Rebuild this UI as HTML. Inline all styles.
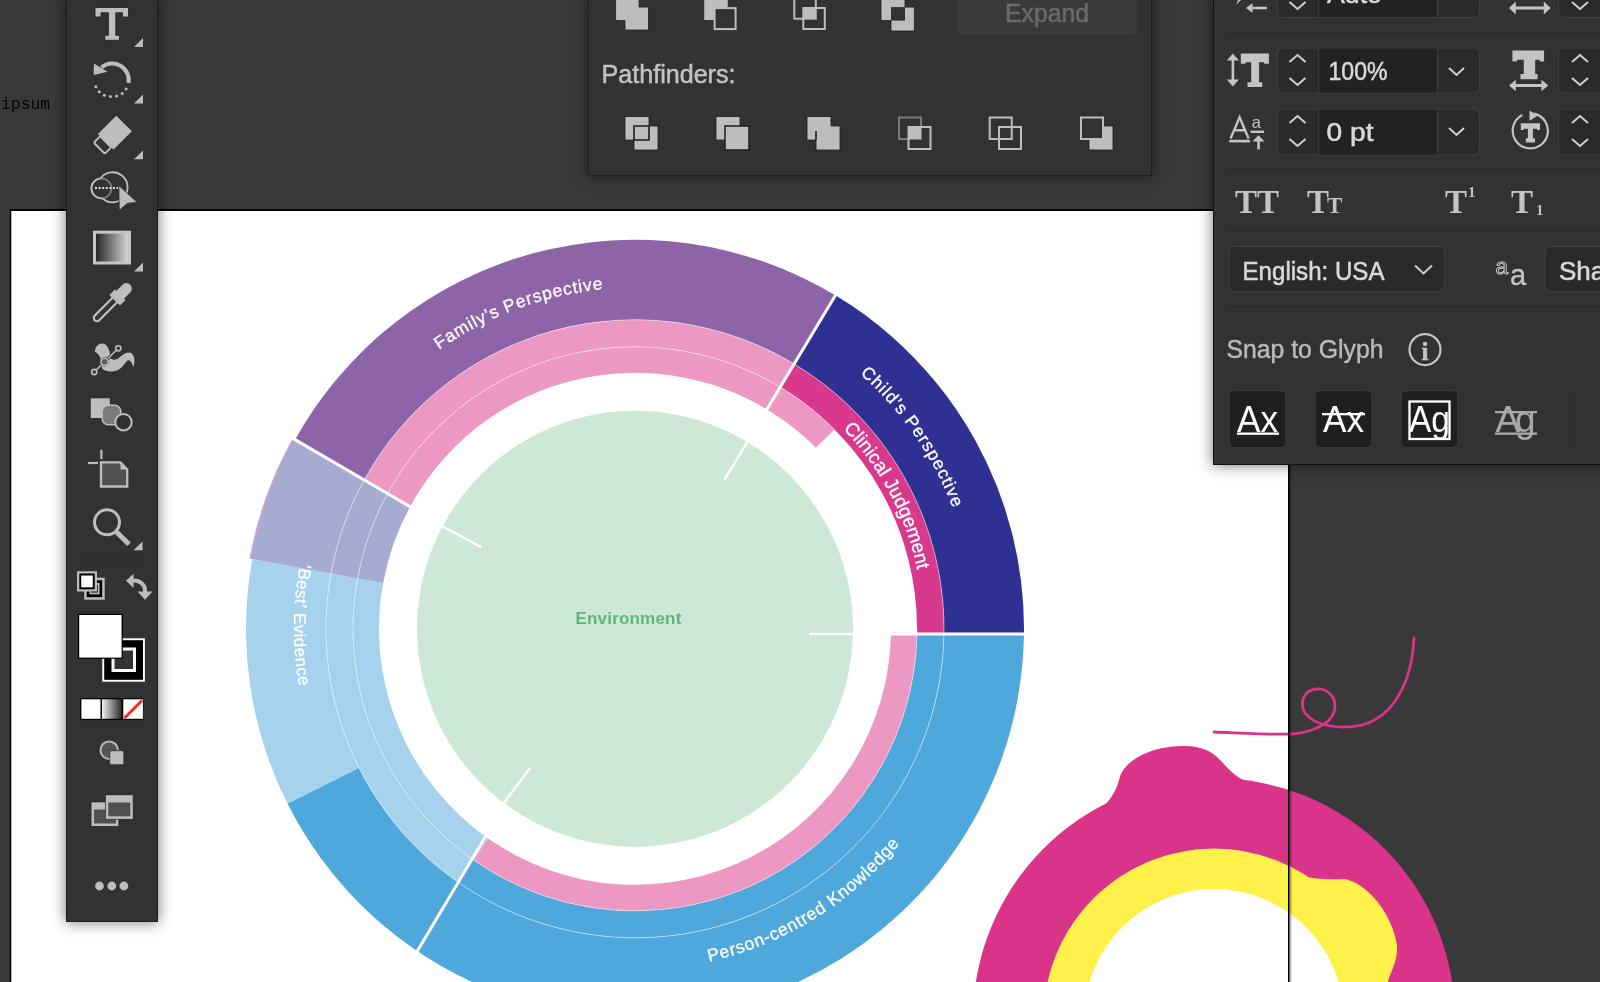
<!DOCTYPE html>
<html><head><meta charset="utf-8">
<style>
html,body{margin:0;padding:0;width:1600px;height:982px;overflow:hidden;background:#393939;}
body{position:relative;font-family:"Liberation Sans",sans-serif;}
.abs{position:absolute;}
#ipsum{left:0.6px;top:95.2px;font-family:"Liberation Mono",monospace;font-size:16.4px;color:#050505;}
#artboard{left:10px;top:209px;width:1279px;height:773px;background:#fff;}
#art{left:0;top:0;width:1600px;height:982px;}
#abborder{left:9px;top:208.5px;width:1279px;height:800px;border:1.5px solid #000;}
.panel{background:#323232;box-shadow:0 0 14px rgba(0,0,0,0.55);}
#toolbar{left:66px;top:-2px;width:90px;height:922px;border:1px solid #1e1e1e;}
#pathf{left:588px;top:-4px;width:562px;height:178px;border:1px solid #202020;}
#charp{left:1213px;top:-4px;width:400px;height:467px;border:1px solid #111;}
#ui{left:0;top:0;width:1600px;height:982px;will-change:transform;}
#art{will-change:transform;}
#ipsum{will-change:transform;}
.t{position:absolute;white-space:nowrap;font-family:"Liberation Sans",sans-serif;}
</style></head><body>
<div id="ipsum" class="abs">ipsum</div>
<div id="artboard" class="abs"></div>
<svg id="art" class="abs" width="1600" height="982" viewBox="0 0 1600 982">
<defs><path id="tp1" d="M339.69,458.30 A341,341 0 0 1 749.95,307.76" fill="none"/><path id="tp2" d="M786.18,324.26 A340,340 0 0 1 973.38,595.62" fill="none"/><path id="tp3" d="M797.16,390.19 A288.5,288.5 0 0 1 923.50,629.81" fill="none"/><path id="tp4" d="M315.80,508.82 A341,341 0 0 0 313.36,742.07" fill="none"/><path id="tp5" d="M586.36,966.31 A341,341 0 0 0 958.94,735.31" fill="none"/></defs>
<path d="M294.61,440.51 A389,389 0 0 1 835.35,295.36 L794.15,363.94 A309,309 0 0 0 364.61,479.23 Z" fill="#8e64a8"/><path d="M835.35,295.36 A389,389 0 0 1 1023.96,634.57 L943.97,633.38 A309,309 0 0 0 794.15,363.94 Z" fill="#2e3192"/><path d="M1023.96,634.57 A389,389 0 0 1 287.48,803.59 L358.95,767.64 A309,309 0 0 0 943.97,633.38 Z" fill="#4fa8dc"/><path d="M287.48,803.59 A389,389 0 0 1 252.27,559.25 L330.98,573.55 A309,309 0 0 0 358.95,767.64 Z" fill="#a6d2ee"/><path d="M249.81,558.80 A391.5,391.5 0 0 1 292.42,439.30 L364.61,479.23 A309,309 0 0 0 330.98,573.55 Z" fill="#a7aad1"/><path d="M250.18,556.78 A391.5,391.5 0 0 1 290.94,441.99" fill="none" stroke="#f0a0d0" stroke-width="0.9"/><path d="M363.83,480.65 A309,309 0 0 1 794.15,363.94 L780.24,387.08 A282,282 0 0 0 387.53,493.59 Z" fill="#ec98c3"/><path d="M794.15,363.94 A309,309 0 0 1 943.97,633.38 L916.97,632.98 A282,282 0 0 0 780.24,387.08 Z" fill="#d9398d"/><path d="M943.97,633.38 A309,309 0 0 1 457.76,881.92 L473.25,859.80 A282,282 0 0 0 916.97,632.98 Z" fill="#4fa8dc"/><path d="M457.76,881.92 A309,309 0 0 1 330.98,573.55 L357.54,578.38 A282,282 0 0 0 473.25,859.80 Z" fill="#a6d2ee"/><path d="M330.98,573.55 A309,309 0 0 1 363.83,480.65 L387.53,493.59 A282,282 0 0 0 357.54,578.38 Z" fill="#a7aad1"/><path d="M387.17,494.24 A282,282 0 0 1 834.40,429.40 L816.02,447.78 A256,256 0 0 0 410.02,506.65 Z" fill="#ec98c3"/><path d="M916.97,632.98 A282,282 0 0 1 473.25,859.80 L488.16,838.50 A256,256 0 0 0 890.97,632.60 Z" fill="#ec98c3"/><path d="M473.25,859.80 A282,282 0 0 1 357.54,578.38 L383.13,583.03 A256,256 0 0 0 488.16,838.50 Z" fill="#a6d2ee"/><path d="M357.54,578.38 A282,282 0 0 1 387.17,494.24 L410.02,506.65 A256,256 0 0 0 383.13,583.03 Z" fill="#a7aad1"/><path d="M387.17,494.24 A282,282 0 0 1 834.40,429.40" stroke="#ffffff" stroke-opacity="0.45" stroke-width="1" fill="none"/><path d="M917.00,628.80 A282,282 0 1 1 387.17,494.24" stroke="#ffffff" stroke-opacity="0.45" stroke-width="1" fill="none"/><path d="M326.00,628.26 A309,309 0 1 1 326.00,629.34" stroke="#ffffff" stroke-opacity="0.45" stroke-width="1" fill="none"/><circle cx="635.0" cy="628.8" r="218" fill="#cde8d6"/><line x1="411.78" y1="507.60" x2="409.14" y2="506.17" stroke="#fff" stroke-width="3"/><line x1="411.78" y1="507.60" x2="291.61" y2="437.67" stroke="#fff" stroke-width="3"/><line x1="765.82" y1="411.08" x2="836.38" y2="293.65" stroke="#fff" stroke-width="3"/><line x1="486.5" y1="834.8" x2="416.5" y2="952.5" stroke="#fff" stroke-width="3"/><line x1="885" y1="634" x2="1026" y2="634" stroke="#fff" stroke-width="3"/><line x1="481.37" y1="547.11" x2="441.63" y2="525.99" stroke="#fff" stroke-width="2.5"/><line x1="724.62" y1="479.65" x2="747.79" y2="441.08" stroke="#fff" stroke-width="2.5"/><line x1="530.28" y1="767.76" x2="503.20" y2="803.70" stroke="#fff" stroke-width="2.5"/><line x1="809" y1="634" x2="855" y2="634" stroke="#fff" stroke-width="2.5"/>
<text font-family="Liberation Sans, sans-serif" font-size="17.5" fill="#fff" stroke="#fff" stroke-width="0.3" letter-spacing="0.85"><textPath href="#tp1" startOffset="50%" text-anchor="middle">Family’s Perspective</textPath></text><text font-family="Liberation Sans, sans-serif" font-size="17.5" fill="#fff" stroke="#fff" stroke-width="0.3" letter-spacing="0.9"><textPath href="#tp2" startOffset="50%" text-anchor="middle">Child’s Perspective</textPath></text><text font-family="Liberation Sans, sans-serif" font-size="19" fill="#fff" stroke="#fff" stroke-width="0.3" letter-spacing="0.05"><textPath href="#tp3" startOffset="50%" text-anchor="middle">Clinical Judgement</textPath></text><text font-family="Liberation Sans, sans-serif" font-size="17" fill="#fff" stroke="#fff" stroke-width="0.3" letter-spacing="0.55"><textPath href="#tp4" startOffset="50%" text-anchor="middle">‘Best’ Evidence</textPath></text><text font-family="Liberation Sans, sans-serif" font-size="17.5" fill="#fff" stroke="#fff" stroke-width="0.3" letter-spacing="0.75"><textPath href="#tp5" startOffset="50%" text-anchor="middle">Person-centred Knowledge</textPath></text>
<text x="628.5" y="624" font-family="Liberation Sans, sans-serif" font-size="17" font-weight="bold" fill="#5fb47c" text-anchor="middle" letter-spacing="0.2">Environment</text>
<!-- donut -->
<circle cx="1214" cy="1019" r="241" fill="#d9338a"/>
<path d="M1097,813 C1109,802 1116,792 1119,780 C1123,760 1152,746 1183,746 C1203,746 1213,752 1222,762 C1232,773 1238,779 1250,782 L1290,790 L1200,830 Z" fill="#d9338a"/>
<circle cx="1214" cy="1019" r="150" fill="none" stroke="#fff04a" stroke-width="41"/>
<path d="M1280,868 C1300,878 1320,880 1345,879 C1370,885 1392,915 1397,945 C1398,962 1390,972 1388,982 L1300,982 Z" fill="#fff04a"/>
<circle cx="1214" cy="1019" r="130" fill="#fff"/>
<path d="M1214,732 C1240,733 1270,735 1290,734 C1310,733 1330,725 1334,712 C1338,698 1328,688 1316,689 C1304,690 1299,703 1305,713 C1314,726 1340,730 1362,725 C1395,716 1412,680 1414,638" fill="none" stroke="#d9338a" stroke-width="2.8" stroke-linecap="round"/>
</svg>
<svg class="abs" style="left:0;top:0" width="1600" height="982"><rect x="9.8" y="209" width="1279.7" height="2" fill="#000"/><rect x="9.8" y="209" width="1.5" height="773" fill="#000"/><rect x="1288" y="209" width="1.6" height="773" fill="#000"/><rect x="1289.6" y="211" width="2" height="771" fill="#000" opacity="0.25"/></svg>
<div id="toolbar" class="abs panel"></div>
<div id="pathf" class="abs panel"></div>
<div id="charp" class="abs panel"></div>
<svg id="ui" class="abs" width="1600" height="982" viewBox="0 0 1600 982">
<g id="toolicons" fill="#bdbdbd">
  <!-- Type tool T -->
  <path d="M95,7.5 H128.5 V17 H122.5 V12.8 H115.8 V35.3 H119.5 V40.3 H104.8 V35.3 H108.4 V12.8 H101 V17 H95 Z" stroke="#1a1a1a" stroke-width="0.8"/>
  <path d="M143,38 V47 H134 Z"/>
  <!-- Rotate -->
  <path d="M101.5,67.5 A16.5,16.5 0 0 1 128.5,83" fill="none" stroke="#bdbdbd" stroke-width="4"/>
  <path d="M94,63.5 L107.5,71.8 L93.6,75 Z"/>
  <g>
    <circle cx="95.8" cy="86.8" r="1.5"/><circle cx="99.3" cy="91.8" r="1.5"/><circle cx="104.3" cy="95.2" r="1.5"/>
    <circle cx="110.4" cy="96.5" r="1.5"/><circle cx="116.6" cy="96.1" r="1.5"/><circle cx="122.2" cy="93.5" r="1.5"/><circle cx="126.1" cy="89" r="1.5"/>
  </g>
  <path d="M143,94.6 V103.5 H134 Z"/>
  <!-- Eraser -->
  <g transform="translate(114.9,132.6) rotate(45)">
    <rect x="-11" y="-13" width="22" height="26" fill="#bdbdbd"/>
    <rect x="-7.8" y="13" width="15.6" height="9" rx="1.5" fill="#323232" stroke="#bdbdbd" stroke-width="2"/>
  </g>
  <path d="M143,150.4 V159.3 H134 Z"/>
  <!-- Shape builder -->
  <circle cx="101.4" cy="188.4" r="10" fill="none" stroke="#7a7a7a" stroke-width="1.8"/>
  <path d="M102.45,198.35 A10,10 0 0 1 100.5,178.4" fill="none" stroke="#bdbdbd" stroke-width="1.8"/>
  <path d="M100.5,178.4 A15,15 0 1 1 102.45,198.35" fill="none" stroke="#bdbdbd" stroke-width="1.8"/>
  <path d="M95,188 H118" stroke="#e0e0e0" stroke-width="2" stroke-dasharray="2,1.6"/>
  <path d="M118.8,185.6 L137.3,202.4 L127.5,203.2 L119.3,210.3 Z" fill="#bdbdbd" stroke="#323232" stroke-width="0.8"/>
  <!-- Gradient -->
  <defs>
    <linearGradient id="gtool" x1="0" x2="1" y1="0" y2="0"><stop offset="0" stop-color="#1e1e1e"/><stop offset="1" stop-color="#dcdcdc"/></linearGradient>
    <linearGradient id="gsw" x1="0" x2="1" y1="0" y2="0"><stop offset="0" stop-color="#f2f2f2"/><stop offset="1" stop-color="#2a2a2a"/></linearGradient>
  </defs>
  <rect x="94.5" y="232.2" width="35" height="30.8" fill="url(#gtool)" stroke="#c4c4c4" stroke-width="3"/>
  <path d="M143,262.6 V271.5 H134 Z"/>
  <!-- Eyedropper -->
  <g transform="translate(118.2,296.7) rotate(-45)">
    <path d="M-4,-3.2 H-30 A3.2,3.2 0 0 0 -30,3.2 H-4 Z" fill="#323232" stroke="#bdbdbd" stroke-width="2.2"/>
    <rect x="-5" y="-7.5" width="8" height="15" rx="1"/>
    <path d="M2,-5.5 H11.5 A5.5,5.5 0 0 1 11.5,5.5 H2 Z"/>
  </g>
  <!-- Puppet warp -->
  <path d="M95,352 C95,346 99,343 103,343.5 C108,344.5 110,351 110.5,358 C113,361 117,360 120,357 C124,353 129,351 132,353.5 C135,357 135,362 133.5,367 C132,363 130,359 127.5,360.5 C124,363 122,371 112,371.5 C104,372 100,368 100.5,362 C101,357 99,354 95,352 Z"/>
  <path d="M94.2,372 L118.3,348.3" stroke="#323232" stroke-width="3.2"/>
  <path d="M94.2,372 L118.3,348.3" stroke="#bdbdbd" stroke-width="1.6"/>
  <circle cx="94.2" cy="372" r="2.6" fill="#323232" stroke="#bdbdbd" stroke-width="1.6"/>
  <circle cx="118.3" cy="348.3" r="2.6" fill="#323232" stroke="#bdbdbd" stroke-width="1.6"/>
  <circle cx="104.6" cy="361.8" r="4.6" fill="#323232"/>
  <circle cx="104.6" cy="361.8" r="3.6" fill="#5a5a5a" stroke="#bdbdbd" stroke-width="1.6"/>
  <!-- Live paint shapes -->
  <rect x="90.8" y="398.3" width="19" height="19.7"/>
  <rect x="102.2" y="405.2" width="18.5" height="19.5" rx="6" fill="#7a7a7a" stroke="#bdbdbd" stroke-width="1.6"/>
  <circle cx="123.5" cy="422.2" r="8.2" fill="#323232" stroke="#bdbdbd" stroke-width="2"/>
  <!-- Artboard tool -->
  <path d="M101.4,449.8 V459" stroke="#bdbdbd" stroke-width="2.2"/>
  <path d="M88,463 H98" stroke="#bdbdbd" stroke-width="2.2"/>
  <path d="M101,462.4 H120.5 L127.2,469.4 V486.5 H101 Z" fill="#505050" stroke="#bdbdbd" stroke-width="2.3"/>
  <path d="M120.5,462.4 L127.2,469.4 H120.5 Z"/>
  <!-- Zoom -->
  <circle cx="107" cy="522.3" r="12.5" fill="none" stroke="#bdbdbd" stroke-width="3"/>
  <path d="M116.5,532 L129,544.3" stroke="#bdbdbd" stroke-width="5"/>
  <path d="M142.5,541.4 V550.3 H133.6 Z"/>
  <!-- separator -->
  <rect x="77" y="559.5" width="70" height="1" fill="#2a2a2a"/>
  <!-- mini fill stroke -->
  <rect x="84.2" y="577.7" width="20.5" height="22" fill="#bdbdbd"/>
  <rect x="86.7" y="580.2" width="15.5" height="17" fill="#000"/>
  <rect x="89.5" y="583" width="10" height="11.3" fill="#bdbdbd"/>
  <rect x="91.3" y="584.8" width="6.4" height="7.7" fill="#000"/>
  <rect x="77" y="571.3" width="20" height="20.2" fill="#bdbdbd"/>
  <rect x="79.3" y="573.5" width="15.4" height="15.8" fill="#000"/>
  <rect x="81.2" y="575.5" width="11.6" height="11.8" fill="#fff"/>
  <!-- swap arrow -->
  <path d="M130,581 C140,579 146,585 145,593" fill="none" stroke="#bdbdbd" stroke-width="4"/>
  <path d="M126,580.8 L133.5,573.8 L133.5,588 Z"/>
  <path d="M137.5,591.5 H152.5 L145,599.8 Z"/>
  <!-- big fill/stroke -->
  <rect x="102.3" y="638.3" width="42.6" height="43.4" fill="#fff"/>
  <rect x="104.2" y="640.2" width="38.8" height="39.6" fill="#000"/>
  <rect x="111.5" y="647.5" width="24.5" height="24.5" fill="#fff"/>
  <rect x="114.5" y="650.5" width="18.5" height="18.5" fill="#333"/>
  <rect x="78" y="613.8" width="44.8" height="45" fill="#000"/>
  <rect x="79.2" y="615" width="42.4" height="42.6" fill="#fff"/>
  <!-- color modes -->
  <rect x="80.2" y="698.1" width="63.2" height="22" fill="#000"/>
  <rect x="81.4" y="699.3" width="19.1" height="19.5" fill="#fff"/>
  <rect x="102" y="699.3" width="19.6" height="19.5" fill="url(#gsw)"/>
  <rect x="123.3" y="699.3" width="19.6" height="19.5" fill="#fff"/>
  <path d="M124.5,718 L142,700.5" stroke="#f5291c" stroke-width="3"/>
  <!-- draw mode -->
  <circle cx="109.2" cy="750.2" r="8.7" fill="#555" stroke="#bdbdbd" stroke-width="2"/>
  <rect x="109.8" y="750.7" width="14" height="14" rx="1.5" fill="#bdbdbd" stroke="#323232" stroke-width="0.8"/>
  <!-- screen mode -->
  <rect x="91.1" y="802" width="27.7" height="24.3" fill="#bdbdbd" stroke="#1e1e1e" stroke-width="0.6"/>
  <rect x="94" y="809.5" width="22" height="14" fill="#505050"/>
  <rect x="105.4" y="794.9" width="27.7" height="24.3" fill="#bdbdbd" stroke="#1e1e1e" stroke-width="0.6"/>
  <rect x="108.3" y="802.5" width="22" height="13.8" fill="#505050"/>
  <!-- dots -->
  <circle cx="99.5" cy="886" r="4.4"/><circle cx="111.8" cy="886" r="4.4"/><circle cx="123.9" cy="886" r="4.4"/>
</g>
<g id="pfpanel">
  <!-- shape modes (top row, cut) -->
  <g fill="#bdbdbd" stroke="#1c1c1c" stroke-width="0.8">
    <!-- unite -->
    <path d="M615.6,-3 H639.1 V7.1 H648.5 V30 H625 V20.6 H615.6 Z"/>
    <!-- minus front -->
    <rect x="703.8" y="-3" width="24.4" height="23.6"/>
    <rect x="714.6" y="8.1" width="21" height="21" fill="#323232" stroke="#bdbdbd" stroke-width="2"/>
    <!-- intersect -->
    <rect x="794.3" y="-2" width="21.5" height="20.7" fill="none" stroke="#bdbdbd" stroke-width="2"/>
    <rect x="803.3" y="8" width="21.5" height="21" fill="none" stroke="#bdbdbd" stroke-width="2"/>
    <rect x="803.3" y="8" width="12.5" height="10.7" stroke="none"/>
    <!-- exclude -->
    <path d="M881,-3 H905 V7.1 H914.4 V31 H891 V20.6 H881 Z"/>
    <rect x="891" y="7.1" width="14" height="13.5" fill="#323232" stroke="none"/>
  </g>
  <!-- Expand button -->
  <rect x="956.6" y="-10" width="181" height="44.7" rx="6" fill="#3a3a3a" stroke="#363636" stroke-width="1"/>
  <text x="1005" y="21.6" font-family="Liberation Sans, sans-serif" font-size="26" fill="#6b6b6b" stroke="#6b6b6b" stroke-width="0.5" textLength="84" lengthAdjust="spacingAndGlyphs">Expand</text>
  <text x="601.5" y="83" font-family="Liberation Sans, sans-serif" font-size="26" fill="#c2c2c2" stroke="#c2c2c2" stroke-width="0.5" textLength="134" lengthAdjust="spacingAndGlyphs">Pathfinders:</text>
  <g fill="#bdbdbd" stroke="#1c1c1c" stroke-width="0.8">
    <!-- divide -->
    <path d="M625,116.5 H649 V126 H658 V150 H634 V140 H625 Z"/>
    <path d="M634,140 V126 H649" fill="none" stroke="#1c1c1c" stroke-width="1.6"/>
    <path d="M649,126 V140 H634" fill="none" stroke="#1c1c1c" stroke-width="1.6"/>
    <!-- trim -->
    <rect x="716" y="116.5" width="24" height="23.5"/>
    <rect x="725" y="126" width="24" height="24" stroke-width="1.5"/>
    <!-- merge -->
    <path d="M807,116.5 H831 V126 H840 V150 H816 V140 H807 Z"/>
    <path d="M816,140 V131" fill="none" stroke="#1c1c1c" stroke-width="1.6"/>
    <!-- crop -->
    <rect x="899" y="117.5" width="22" height="21.5" fill="none" stroke="#7a7a7a" stroke-width="2"/>
    <rect x="908.5" y="127" width="22" height="22" fill="none" stroke="#bdbdbd" stroke-width="2"/>
    <rect x="908.5" y="127" width="12.5" height="12" stroke="none"/>
    <!-- outline -->
    <rect x="989.7" y="117.5" width="22" height="21.5" fill="none" stroke="#bdbdbd" stroke-width="2"/>
    <rect x="999" y="127" width="22" height="22" fill="none" stroke="#bdbdbd" stroke-width="2"/>
    <!-- minus back -->
    <rect x="1089" y="126" width="24" height="24"/>
    <rect x="1081" y="117.5" width="22" height="21.5" fill="#323232" stroke="#bdbdbd" stroke-width="2"/>
  </g>
</g>
<g id="charpanel">
  <!-- separators -->
  <rect x="1227" y="32.5" width="373" height="1.2" fill="#2a2a2a"/>
  <rect x="1227" y="169.5" width="373" height="1.2" fill="#2a2a2a"/>
  <rect x="1227" y="230" width="373" height="1.2" fill="#2a2a2a"/>
  <rect x="1227" y="306.5" width="373" height="1.2" fill="#2a2a2a"/>
  <!-- inputs -->
  <g stroke="#3e3e3e" stroke-width="1.2">
    <rect x="1277.5" y="-20" width="202" height="37.5" rx="5" fill="#2a2a2a"/>
    <rect x="1277.5" y="48" width="202" height="45" rx="5" fill="#2a2a2a"/>
    <rect x="1277.5" y="109" width="202" height="46" rx="5" fill="#2a2a2a"/>
    <rect x="1558.5" y="-20" width="60" height="37.5" rx="5" fill="#2a2a2a"/>
    <rect x="1558.5" y="48" width="60" height="45" rx="5" fill="#2a2a2a"/>
    <rect x="1558.5" y="109" width="60" height="46" rx="5" fill="#2a2a2a"/>
    <rect x="1229" y="246.5" width="215.5" height="45" rx="5" fill="#2a2a2a"/>
    <rect x="1545" y="246.5" width="80" height="45" rx="5" fill="#2a2a2a"/>
  </g>
  <g fill="#222">
    <rect x="1319" y="-20" width="118.5" height="37" />
    <rect x="1319" y="48.6" width="118.5" height="44" />
    <rect x="1319" y="109.6" width="118.5" height="45" />
  </g>
  <g fill="none" stroke="#3e3e3e" stroke-width="1.2">
    <path d="M1318.7,-20 V17.5 M1437.7,-20 V17.5"/>
    <path d="M1318.7,48 V93 M1437.7,48 V93"/>
    <path d="M1318.7,109 V155 M1437.7,109 V155"/>
  </g>
  <!-- chevrons -->
  <g fill="none" stroke="#d0d0d0" stroke-width="2">
    <path d="M1289.5,2 L1297.5,9 L1305.5,2"/>
    <path d="M1289.5,62 L1297.5,55 L1305.5,62"/>
    <path d="M1289.5,78 L1297.5,85 L1305.5,78"/>
    <path d="M1289.5,123 L1297.5,116 L1305.5,123"/>
    <path d="M1289.5,139 L1297.5,146 L1305.5,139"/>
    <path d="M1449,68 L1456.5,75 L1464,68"/>
    <path d="M1449,128 L1456.5,135 L1464,128"/>
    <path d="M1572,2 L1580,9 L1588,2"/>
    <path d="M1572,62 L1580,55 L1588,62"/>
    <path d="M1572,78 L1580,85 L1588,78"/>
    <path d="M1572,123 L1580,116 L1588,123"/>
    <path d="M1572,139 L1580,146 L1588,139"/>
    <path d="M1415,265.5 L1423.5,273.5 L1432,265.5"/>
  </g>
  <g font-family="Liberation Sans, sans-serif" fill="#d8d8d8" font-size="26" stroke="#d8d8d8" stroke-width="0.55">
    <text x="1327" y="3.2" textLength="55" lengthAdjust="spacingAndGlyphs">Auto</text>
    <text x="1328.5" y="79.6" textLength="59" lengthAdjust="spacingAndGlyphs">100%</text>
    <text x="1326.5" y="140.8" textLength="47" lengthAdjust="spacingAndGlyphs">0 pt</text>
    <text x="1242.5" y="279.6" textLength="142" lengthAdjust="spacingAndGlyphs">English: USA</text>
    <text x="1559" y="279.6">Sha</text>
    <text x="1226.5" y="357.7" font-size="25" fill="#bcbcbc" stroke="#bcbcbc" stroke-width="0.4" textLength="157" lengthAdjust="spacingAndGlyphs">Snap to Glyph</text>
  </g>
  <!-- icons -->
  <g fill="#c4c4c4">
    <!-- row1 left partial -->
    <path d="M1238,0 L1241,0 L1236,5 Z"/>
    <path d="M1246,8 L1252.5,3 V6.8 H1267 V9.2 H1252.5 V13 Z"/>
    <!-- row1 right arrow <-> -->
    <path d="M1509,8 L1515.8,1.6 V6.4 H1543.8 V1.6 L1550.6,8 L1543.8,14.6 V9.6 H1515.8 V14.6 Z"/>
    <!-- vertical scale IT -->
    <path d="M1232.9,53.4 L1239,60.5 H1234.2 V79.5 H1239 L1232.9,86.5 L1226.8,79.5 H1231.6 V60.5 H1226.8 Z"/>
    <path d="M1240.8,53.4 H1268.9 V63.8 H1264.6 L1263.8,62.2 H1259.1 V82.2 H1262.2 V87 H1247.5 V82.2 H1251.2 V62.2 H1246 L1245.2,63.8 H1240.8 Z"/>
    <!-- baseline shift Aa -->
    <path d="M1230.6,138.5 L1239.6,117.3 L1248.6,138.5 M1233.6,130.2 H1245.6" fill="none" stroke="#c4c4c4" stroke-width="2.4"/>
    <text x="1251.8" y="128.2" font-family="Liberation Sans, sans-serif" font-size="16.5">a</text>
    <rect x="1229.2" y="139.8" width="20.8" height="2.6"/>
    <rect x="1250.6" y="130.6" width="13.4" height="2.4"/>
    <path d="M1258.5,135.3 L1264.6,141.5 H1259.8 V149.4 H1257.2 V141.5 H1252.4 Z"/>
    <!-- horiz scale T -->
    <path d="M1512.4,50.5 H1544.1 V61.5 H1540 L1539.3,59.8 H1535.2 V74 H1537.6 V79.3 H1520.5 V74 H1523.8 V59.8 H1517.3 L1516.6,61.5 H1512.4 Z"/>
    <path d="M1509,85.5 L1515.8,79.8 V84.1 H1541.4 V79.8 L1548.2,85.5 L1541.4,91.2 V86.9 H1515.8 V91.2 Z"/>
    <!-- rotate T -->
    <circle cx="1530.3" cy="130.8" r="17.6" fill="none" stroke="#c4c4c4" stroke-width="2.2" stroke-dasharray="98,13" transform="rotate(-78 1530.3 130.8)"/>
    <path d="M1529.5,110.5 L1538,115.6 L1529.5,120.7 Z"/>
    <path d="M1520.8,123.2 H1540 V130 H1537.3 L1536.8,128.8 H1532.9 V138.2 H1535 V142.4 H1525.8 V138.2 H1527.9 V128.8 H1524 L1523.5,130 H1520.8 Z"/>
    <!-- TT row -->
    <g font-family="Liberation Serif, serif" font-weight="bold">
      <text x="1235" y="213" font-size="33">TT</text>
      <text x="1307" y="213" font-size="33">T</text>
      <text x="1327" y="213" font-size="23">T</text>
      <text x="1445" y="213" font-size="33">T</text>
      <text x="1468" y="197" font-size="15">1</text>
      <text x="1511" y="213" font-size="33">T</text>
      <text x="1536" y="215" font-size="15">1</text>
    </g>
    <!-- aa icon -->
    <text x="1495.5" y="274" font-family="Liberation Sans, sans-serif" font-size="22.5" fill="none" stroke="#c4c4c4" stroke-width="1">a</text>
    <text x="1510" y="285" font-family="Liberation Sans, sans-serif" font-size="29" stroke="#c4c4c4" stroke-width="0.4">a</text>
    <!-- info -->
    <circle cx="1425" cy="349.6" r="15.5" fill="none" stroke="#c4c4c4" stroke-width="2.2"/>
    <text x="1425" y="359.5" font-family="Liberation Serif, serif" font-weight="bold" font-size="25" text-anchor="middle" stroke="#c4c4c4" stroke-width="0.6">i</text>
  </g>
  <!-- snap buttons -->
  <g stroke="#383838" stroke-width="1.4" fill="#1f1f1f">
    <rect x="1229" y="390.6" width="57" height="57" rx="5"/>
    <rect x="1315" y="390.6" width="57" height="57" rx="5"/>
    <rect x="1401" y="390.6" width="57" height="57" rx="5"/>
  </g>
  <g font-family="Liberation Sans, sans-serif" font-size="37" fill="#fff">
    <text x="1257.5" y="432" text-anchor="middle" textLength="41" lengthAdjust="spacingAndGlyphs">Ax</text>
    <rect x="1237" y="432.5" width="42" height="2.3"/>
    <text x="1343.5" y="432" text-anchor="middle" textLength="41" lengthAdjust="spacingAndGlyphs">Ax</text>
    <rect x="1322" y="413" width="43" height="2.3"/>
    <text x="1429.5" y="432" text-anchor="middle" textLength="41" lengthAdjust="spacingAndGlyphs">Ag</text>
    <rect x="1409.5" y="401.5" width="40" height="37.5" fill="none" stroke="#fff" stroke-width="2.3"/>
    <text x="1515.5" y="432" text-anchor="middle" textLength="40" fill="#a8a8a8">Ag</text>
    <rect x="1495" y="411" width="42" height="2.3" fill="#a8a8a8"/>
    <rect x="1495" y="432.5" width="42" height="2.3" fill="#a8a8a8"/>
  </g>
  <rect x="1573.5" y="392" width="1" height="56" fill="#2a2a2a"/>
</g>

</svg>
</body></html>
